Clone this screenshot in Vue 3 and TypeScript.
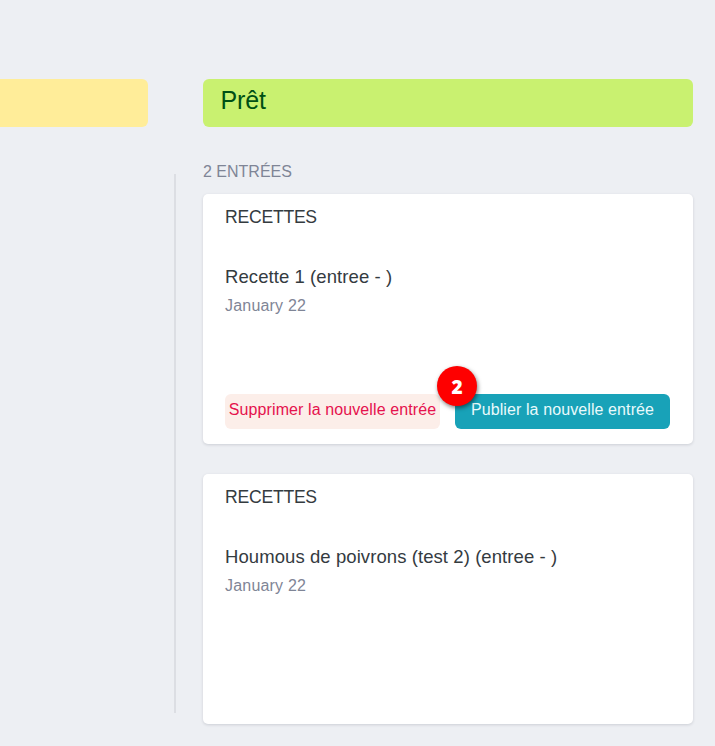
<script setup lang="ts">
interface Entry {
  id: number
  section: string
  title: string
  date: string
  editable: boolean
}

const entries: Entry[] = [
  { id: 1, section: 'RECETTES', title: 'Recette 1 (entree - )', date: 'January 22', editable: true },
  { id: 2, section: 'RECETTES', title: 'Houmous de poivrons (test 2) (entree - )', date: 'January 22', editable: false },
]
</script>

<template>
  <main class="board">
    <section class="column previous">
      <header class="status pending"></header>
    </section>
    <div class="divider"></div>
    <section class="column ready">
      <header class="status done">Prêt</header>
      <p class="count">{{ entries.length }} ENTRÉES</p>
      <div class="cards">
        <article v-for="entry in entries" :key="entry.id" class="card">
          <div class="section">{{ entry.section }}</div>
          <h2 class="title">{{ entry.title }}</h2>
          <div class="date">{{ entry.date }}</div>
          <div v-if="entry.editable" class="actions">
            <button class="btn remove" type="button">Supprimer la nouvelle entrée</button>
            <button class="btn publish" type="button">
              Publier la nouvelle entrée
              <span class="badge">2</span>
            </button>
          </div>
        </article>
      </div>
    </section>
  </main>
</template>

<style>
body {
  background: #edeff3;
}
</style>

<style scoped>
.board {
  box-sizing: border-box;
  display: flex;
  width: 715px;
  height: 746px;
  padding: 79px 22px 0 0;
  overflow: hidden;
  background: #edeff3;
  font-family: "Liberation Sans", Arial, sans-serif;
}
.previous {
  width: 148px;
}
.status {
  box-sizing: border-box;
  height: 48px;
  border-radius: 6px;
}
.pending {
  border-radius: 0 6px 6px 0;
  background: #ffed99;
}
.divider {
  width: 2px;
  height: 539px;
  margin: 95px 27px 0 26px;
  background: #dcdee3;
}
.ready {
  width: 490px;
}
.done {
  padding: 7px 18px 0 17.5px;
  background: #c9f170;
  color: #005014;
  font-size: 25px;
  letter-spacing: -0.1px;
  line-height: 28px;
}
.count {
  margin: 35px 0 12px;
  color: #7f8596;
  font-size: 16px;
  line-height: 20px;
}
.cards {
  display: flex;
  flex-direction: column;
  gap: 30px;
}
.card {
  box-sizing: border-box;
  display: flex;
  flex-direction: column;
  height: 250px;
  padding: 12px 23px 15px 22px;
  border-radius: 5px;
  background: #fff;
  box-shadow: 0 1px 3px rgba(40, 45, 60, 0.16);
}
.section {
  color: #343b3f;
  font-size: 17.6px;
  letter-spacing: -0.25px;
  line-height: 22px;
}
.title {
  margin: 38px 0 0;
  color: #343b3f;
  font-size: 18.5px;
  font-weight: 400;
  letter-spacing: 0.08px;
  line-height: 22px;
}
.date {
  margin-top: 8px;
  color: #7f8596;
  font-size: 16px;
  letter-spacing: 0.2px;
  line-height: 20px;
}
.actions {
  display: flex;
  gap: 15px;
  margin-top: auto;
}
.btn {
  position: relative;
  box-sizing: border-box;
  width: 215px;
  height: 35px;
  padding: 0 0 4px;
  border: 0;
  border-radius: 6px;
  font-family: inherit;
  font-size: 16px;
  letter-spacing: 0.1px;
  line-height: 20px;
  white-space: nowrap;
}
.remove {
  background: #fceee9;
  color: #e5124d;
}
.publish {
  background: #18a2b8;
  color: #e9fafc;
}
.badge {
  position: absolute;
  top: -28px;
  left: -18px;
  width: 40px;
  height: 40px;
  border-radius: 50%;
  background: #fe0000;
  box-shadow: 1px 2px 4px rgba(0, 0, 0, 0.5);
  color: #fff;
  font-family: "Open Sans", sans-serif;
  font-size: 19px;
  font-weight: 800;
  line-height: 42px;
  text-align: center;
}
</style>
